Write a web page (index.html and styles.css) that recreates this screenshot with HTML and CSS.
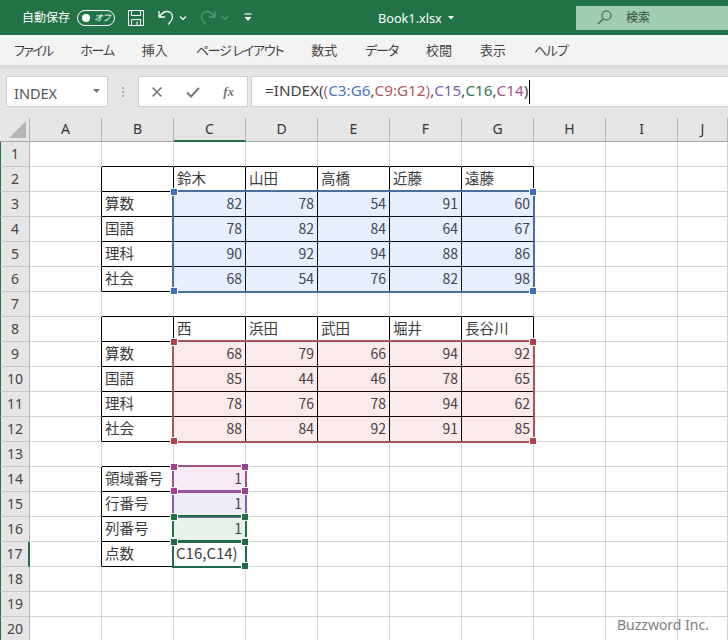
FILE: index.html
```html
<!DOCTYPE html>
<html lang="ja">
<head>
<meta charset="utf-8">
<title>Book1.xlsx</title>
<link rel="stylesheet" href="styles.css">
</head>
<body>
<div class="app">
  <header class="titlebar">
    <span class="autosave">自動保存</span>
    <span class="toggle"><i class="dot"></i><em>オフ</em></span>
    <svg class="ic save" width="18" height="18" viewBox="0 0 18 18"><path d="M1.5 1.5h15v15h-15zM4.5 1.5v5h9v-5M4.5 16.5v-6h9v6M10 12.5v4" fill="none" stroke="#fff" stroke-width="1"/></svg>
    <svg class="ic undo" width="18" height="18" viewBox="0 0 18 18"><path d="M2 2v6h6M2.5 7.5C5 4 7 2.5 10 2.5c3.500 0 5.500 2.500 5.500 5.500 0 3-2 5-4.500 7.500" fill="none" stroke="#fff" stroke-width="1.300"/></svg>
    <svg class="ic caret" width="8" height="6" viewBox="0 0 8 6"><path d="M1 1.500l3 3 3-3" fill="none" stroke="#fff" stroke-width="1.200"/></svg>
    <svg class="ic redo" width="18" height="18" viewBox="0 0 18 18"><path d="M16 2v6h-6M15.500 7.500C13 4 11 2.500 8 2.500c-3.500 0-5.500 2.500-5.500 5.500 0 3 2 5 4.500 7.500" fill="none" stroke="#5c9a78" stroke-width="1.300"/></svg>
    <svg class="ic caret2" width="8" height="6" viewBox="0 0 8 6"><path d="M1 1.500l3 3 3-3" fill="none" stroke="#5c9a78" stroke-width="1.200"/></svg>
    <svg class="ic more" width="8" height="9" viewBox="0 0 8 9"><path d="M0.500 1h7" stroke="#fff" stroke-width="1.200"/><path d="M0.500 4l3.500 4 3.500-4z" fill="#fff"/></svg>
    <span class="filename">Book1.xlsx</span>
    <svg class="ic filecaret" width="6" height="4" viewBox="0 0 6 4"><path d="M0 0h6l-3 3.500z" fill="#fff"/></svg>
    <div class="search">
      <svg width="15" height="15" viewBox="0 0 15 15"><circle cx="9.500" cy="5.500" r="4.500" fill="none" stroke="#2f5d44" stroke-width="1.100"/><path d="M6.200 8.800L1 14" stroke="#2f5d44" stroke-width="1.100"/></svg>
      <span>検索</span>
    </div>
  </header>

  <nav class="tabs">
    <span class="kana tight">ファイル</span><span class="kana">ホーム</span><span>挿入</span><span class="kana">ページ レイアウト</span><span>数式</span><span class="kana">データ</span><span>校閲</span><span>表示</span><span class="kana">ヘルプ</span>
  </nav>

  <div class="formulabar">
    <div class="namebox"><span>INDEX</span><svg width="7" height="4" viewBox="0 0 7 4"><path d="M0 0h7l-3.500 4z" fill="#777"/></svg></div>
    <div class="grip"><i></i><i></i><i></i></div>
    <div class="fxbox">
      <svg width="12" height="12" viewBox="0 0 12 12"><path d="M1.500 1.500l9 9M10.500 1.500l-9 9" stroke="#777" stroke-width="1.700"/></svg>
      <svg width="14" height="12" viewBox="0 0 14 12"><path d="M1 6.500l4 4 8-8.500" fill="none" stroke="#777" stroke-width="2"/></svg>
      <span class="fx">fx</span>
    </div>
    <div class="formula">=INDEX(<span class="p1">(</span><span class="blue">C3:G6</span>,<span class="red">C9:G12</span><span class="p1">)</span>,<span class="purple">C15</span>,<span class="green">C16</span>,<span class="magenta">C14</span>)<i class="cursor"></i></div>
  </div>

  <main class="sheet">
    <div class="grid">
    <div class="ch corner"><svg width="17" height="17" viewBox="0 0 17 17"><path d="M17 0v17H0z" fill="#b5b5b5"/></svg></div>
    <div class="ch">A</div><div class="ch">B</div><div class="ch on">C</div><div class="ch">D</div><div class="ch">E</div><div class="ch">F</div><div class="ch">G</div><div class="ch">H</div><div class="ch">I</div><div class="ch">J</div>

    <div class="rh">1</div><div class="c"></div><div class="c u"></div><div class="c u"></div><div class="c u"></div><div class="c u"></div><div class="c u"></div><div class="c u"></div><div class="c"></div><div class="c"></div><div class="c"></div>
    <div class="rh">2</div><div class="c k"></div><div class="c k u"></div><div class="c k u">鈴木</div><div class="c k u">山田</div><div class="c k u">高橋</div><div class="c k u">近藤</div><div class="c k u">遠藤</div><div class="c"></div><div class="c"></div><div class="c"></div>
    <div class="rh">3</div><div class="c k"></div><div class="c k u">算数</div><div class="c k u n">82</div><div class="c k u n">78</div><div class="c k u n">54</div><div class="c k u n">91</div><div class="c k u n">60</div><div class="c"></div><div class="c"></div><div class="c"></div>
    <div class="rh">4</div><div class="c k"></div><div class="c k u">国語</div><div class="c k u n">78</div><div class="c k u n">82</div><div class="c k u n">84</div><div class="c k u n">64</div><div class="c k u n">67</div><div class="c"></div><div class="c"></div><div class="c"></div>
    <div class="rh">5</div><div class="c k"></div><div class="c k u">理科</div><div class="c k u n">90</div><div class="c k u n">92</div><div class="c k u n">94</div><div class="c k u n">88</div><div class="c k u n">86</div><div class="c"></div><div class="c"></div><div class="c"></div>
    <div class="rh">6</div><div class="c k"></div><div class="c k u">社会</div><div class="c k u n">68</div><div class="c k u n">54</div><div class="c k u n">76</div><div class="c k u n">82</div><div class="c k u n">98</div><div class="c"></div><div class="c"></div><div class="c"></div>
    <div class="rh">7</div><div class="c"></div><div class="c u"></div><div class="c u"></div><div class="c u"></div><div class="c u"></div><div class="c u"></div><div class="c u"></div><div class="c"></div><div class="c"></div><div class="c"></div>
    <div class="rh">8</div><div class="c k"></div><div class="c k u"></div><div class="c k u">西</div><div class="c k u">浜田</div><div class="c k u">武田</div><div class="c k u">堀井</div><div class="c k u">長谷川</div><div class="c"></div><div class="c"></div><div class="c"></div>
    <div class="rh">9</div><div class="c k"></div><div class="c k u">算数</div><div class="c k u n">68</div><div class="c k u n">79</div><div class="c k u n">66</div><div class="c k u n">94</div><div class="c k u n">92</div><div class="c"></div><div class="c"></div><div class="c"></div>
    <div class="rh">10</div><div class="c k"></div><div class="c k u">国語</div><div class="c k u n">85</div><div class="c k u n">44</div><div class="c k u n">46</div><div class="c k u n">78</div><div class="c k u n">65</div><div class="c"></div><div class="c"></div><div class="c"></div>
    <div class="rh">11</div><div class="c k"></div><div class="c k u">理科</div><div class="c k u n">78</div><div class="c k u n">76</div><div class="c k u n">78</div><div class="c k u n">94</div><div class="c k u n">62</div><div class="c"></div><div class="c"></div><div class="c"></div>
    <div class="rh">12</div><div class="c k"></div><div class="c k u">社会</div><div class="c k u n">88</div><div class="c k u n">84</div><div class="c k u n">92</div><div class="c k u n">91</div><div class="c k u n">85</div><div class="c"></div><div class="c"></div><div class="c"></div>
    <div class="rh">13</div><div class="c"></div><div class="c u"></div><div class="c"></div><div class="c"></div><div class="c"></div><div class="c"></div><div class="c"></div><div class="c"></div><div class="c"></div><div class="c"></div>
    <div class="rh">14</div><div class="c k"></div><div class="c k u">領域番号</div><div class="c n">1</div><div class="c"></div><div class="c"></div><div class="c"></div><div class="c"></div><div class="c"></div><div class="c"></div><div class="c"></div>
    <div class="rh">15</div><div class="c k"></div><div class="c k u">行番号</div><div class="c n">1</div><div class="c"></div><div class="c"></div><div class="c"></div><div class="c"></div><div class="c"></div><div class="c"></div><div class="c"></div>
    <div class="rh">16</div><div class="c k"></div><div class="c k u">列番号</div><div class="c n">1</div><div class="c"></div><div class="c"></div><div class="c"></div><div class="c"></div><div class="c"></div><div class="c"></div><div class="c"></div>
    <div class="rh on">17</div><div class="c k"></div><div class="c k u">点数</div><div class="c edit">C16,C14)</div><div class="c"></div><div class="c"></div><div class="c"></div><div class="c"></div><div class="c"></div><div class="c"></div><div class="c"></div>
    <div class="rh">18</div><div class="c"></div><div class="c"></div><div class="c"></div><div class="c"></div><div class="c"></div><div class="c"></div><div class="c"></div><div class="c"></div><div class="c"></div><div class="c"></div>
    <div class="rh">19</div><div class="c"></div><div class="c"></div><div class="c"></div><div class="c"></div><div class="c"></div><div class="c"></div><div class="c"></div><div class="c"></div><div class="c"></div><div class="c"></div>
    <div class="rh">20</div><div class="c"></div><div class="c"></div><div class="c"></div><div class="c"></div><div class="c"></div><div class="c"></div><div class="c"></div><div class="c"></div><div class="c"></div><div class="c"></div>
    </div>

    <div class="grid overlay">
      <div class="range r-blue"><b class="tl"></b><b class="tr"></b><b class="bl"></b><b class="br"></b></div>
      <div class="range r-red"><b class="tl"></b><b class="tr"></b><b class="bl"></b><b class="br"></b></div>
      <div class="range r-purple"></div>
      <div class="range r-magenta"><b class="tl"></b><b class="tr"></b><b class="bl"></b><b class="br"></b></div>
      <div class="range r-green"><b class="tl"></b><b class="tr"></b><b class="bl"></b><b class="br"></b></div>
      <div class="range r-active"><b class="tl"></b><b class="tr"></b><b class="br"></b></div>
    </div>

    <div class="watermark">Buzzword Inc.</div>
  </main>
</div>
</body>
</html>
```
FILE: styles.css
```css
* { box-sizing: border-box; }
html, body { margin: 0; height: 100%; overflow: hidden; background: #fff; }
body { font-family: "Noto Sans CJK JP", "Noto Sans", sans-serif; color: #333; }
.app { width: 728px; height: 640px; overflow: hidden; display: flex; flex-direction: column; }

/* title bar */
.titlebar { height: 35px; flex: none; background: #217346; color: #fff; display: flex; align-items: center; font-size: 12px; }
.autosave { margin-left: 22px; width: 48px; white-space: nowrap; font-size: 12px; padding-bottom: 2px; }
.toggle { margin-left: 7px; width: 38px; height: 16px; border: 1px solid #fff; border-radius: 8px; display: flex; align-items: center; padding-left: 4px; }
.toggle .dot { width: 8px; height: 8px; border-radius: 50%; background: #fff; }
.toggle em { font-size: 9px; margin-left: 4px; font-style: italic; letter-spacing: -1px; line-height: 1; }
.ic { flex: none; display: block; }
.save { margin-left: 12px; }
.undo { margin-left: 12px; }
.caret { margin-left: 4px; }
.redo { margin-left: 12px; }
.caret2 { margin-left: 4px; }
.more { margin-left: 15px; }
.filename { margin-left: 126px; width: 64px; font-family: "Noto Sans", sans-serif; font-size: 12.7px; white-space: nowrap; }
.filecaret { margin-left: 6px; }
.search { margin-left: 122px; width: 152px; height: 24px; background: #9fcdb0; color: #2f4f3c; display: flex; align-items: center; padding-left: 21px; font-size: 12px; }
.search span { margin-left: 14px; padding-bottom: 2px; }

/* ribbon tabs */
.tabs { height: 30px; flex: none; background: #f3f3f3; display: flex; align-items: center; gap: 28px; padding: 0 0 2px 14px; font-size: 13px; color: #444; font-feature-settings: "palt"; white-space: nowrap; }
.tabs .kana { letter-spacing: -1.2px; }
.tabs .tight { letter-spacing: -1.7px; }

/* formula bar */
.formulabar { height: 53px; flex: none; background: linear-gradient(#d6d6d6, #e6e6e6 7px); display: flex; align-items: flex-start; padding: 11px 0 0 6px; }
.namebox { width: 102px; height: 31px; background: #fff; border: 1px solid #cfcfcf; display: flex; align-items: center; justify-content: space-between; padding: 2px 7px 0 7px; font-family: "Noto Sans", sans-serif; font-size: 14.5px; color: #555; }
.namebox svg { margin-bottom: 4px; }
.grip { width: 30px; height: 31px; display: flex; flex-direction: column; align-items: center; justify-content: center; gap: 2px; }
.grip i { width: 2px; height: 2px; background: #aaa; }
.fxbox { width: 110px; height: 31px; background: #fff; border: 1px solid #cfcfcf; display: flex; align-items: center; justify-content: space-between; padding: 0 13px 0 12px; }
.fx { font-family: "Liberation Serif", serif; font-style: italic; font-weight: 700; font-size: 13px; color: #777; }
.formula { margin-left: 3px; flex: 1; height: 31px; background: #fff; border: 1px solid #cfcfcf; border-right: 0; display: flex; align-items: center; padding: 0 0 3px 13px; font-family: "Noto Sans", sans-serif; font-size: 15.25px; color: #444; white-space: pre; }
.cursor { width: 1px; height: 24px; background: #000; margin: 3px 0 0 1px; }
.p1 { color: #b07078; }
.blue { color: #4a78b4; }
.red { color: #b8565c; }
.purple { color: #7a62ac; }
.green { color: #2a7a50; }
.magenta { color: #a0558f; }

/* sheet */
.sheet { position: relative; flex: 1; background: #fff; overflow: hidden; }
.grid { display: grid; grid-template-columns: 30px repeat(9, 72px) 50px; grid-template-rows: 24px repeat(20, 25px); }
.overlay { position: absolute; top: 0; left: 0; }
.ch { background: #e6e6e6; border-bottom: 1px solid #a8a8a8; border-right: 1px solid #b4b4b4; display: flex; align-items: center; justify-content: center; padding-bottom: 2px; font-family: "Noto Sans", sans-serif; font-size: 14px; color: #333; }
.ch.on { border-bottom: 2px solid #217346; }
.corner { align-items: flex-end; justify-content: flex-end; padding: 0 3px 3px 0; }
.rh { background: #e6e6e6; border-left: 1px solid #217346; border-right: 1px solid #b0b0b0; border-bottom: 1px solid #c6c6c6; display: flex; align-items: center; justify-content: center; padding-bottom: 2px; font-family: "Noto Sans", sans-serif; font-size: 14px; color: #444; }
.rh.on { border-right: 2px solid #217346; }
.c { border-right: 1px solid #d4d4d4; border-bottom: 1px solid #d4d4d4; padding: 0 3px; font-size: 14.5px; line-height: 22px; color: #3c3c3c; white-space: nowrap; min-width: 0; }
.c.k { border-right-color: #000; }
.c.u { border-bottom-color: #000; }
.c.n { text-align: right; font-size: 14px; }
.c.edit { font-size: 15px; padding-left: 2px; overflow: visible; }

/* reference ranges drawn over the cells */
.range { border: 2px solid; margin: -2px -1px -1px -2px; position: relative; }
.range b { position: absolute; width: 6px; height: 6px; box-shadow: 0 0 0 1px #fff; }
.range .tl { top: -3px; left: -3px; }
.range .tr { top: -3px; right: -3px; }
.range .bl { bottom: -3px; left: -3px; }
.range .br { bottom: -3px; right: -3px; }
.r-blue { grid-column: 4 / 9; grid-row: 4 / 8; border-color: #4a6f9e; background: rgba(70, 130, 230, .13); }
.r-blue b { background: #3d70b8; }
.r-red { grid-column: 4 / 9; grid-row: 10 / 14; border-color: #a8535a; background: rgba(200, 70, 70, .11); }
.r-red b { background: #b5404a; }
.r-purple { grid-column: 4 / 5; grid-row: 16 / 17; border-color: #7f5fac; background: rgba(112, 80, 180, .11); }
.r-magenta { grid-column: 4 / 5; grid-row: 15 / 16; border-color: #a0508c; background: rgba(190, 60, 150, .11); }
.r-magenta b { background: #a0408c; }
.r-green { grid-column: 4 / 5; grid-row: 17 / 18; border-color: #1f7246; background: rgba(33, 135, 70, .11); }
.r-green b { background: #1f7246; }
.r-active { grid-column: 4 / 5; grid-row: 18 / 19; border-color: #1f6a48; }
.r-active b { background: #1f6a48; }

.watermark { position: absolute; right: 19px; bottom: 6px; font-family: "Noto Sans", sans-serif; font-size: 14px; color: #808080; line-height: 18px; }
```
